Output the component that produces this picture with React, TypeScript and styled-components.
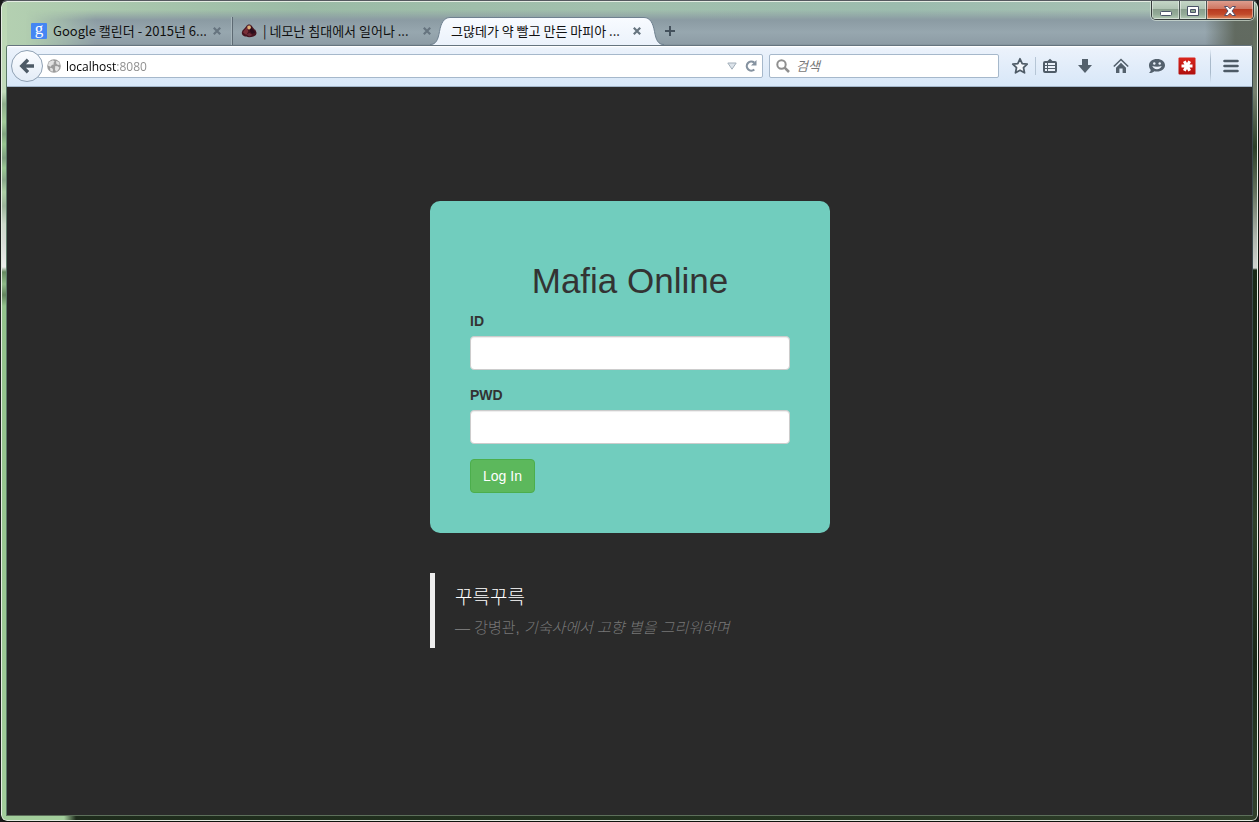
import React, { useState } from "react";
import styled, { createGlobalStyle, css } from "styled-components";

const uiFont = `"Open Sans", "Noto Sans CJK KR", sans-serif`;
const pageFont = `"Liberation Sans", "Noto Sans CJK KR", sans-serif`;

const GlobalStyle = createGlobalStyle`
  *, *::before, *::after { box-sizing: border-box; }
  body { margin: 0; background: #1a1a1a; }
  button, input { font: inherit; margin: 0; padding: 0; border: 0; background: none; }
`;

/* ---------- window frame ---------- */

const Frame = styled.div`
  min-height: 100vh;
  display: flex;
  border: 1px solid #33373b;
  border-color: #55595f #10140f #10140f #1c1f1d;
  border-radius: 7px;
  overflow: hidden;
  font: 12px/16px ${uiFont};
`;

const Glass = styled.div`
  flex: 1;
  min-width: 0;
  display: flex;
  flex-direction: column;
  padding: 0 4px 4px;
  border: 1px solid #e4ece2;
  border-radius: 6px;
  background:
    linear-gradient(to right, #a2cd9b 62px, #1e2c1c 74px, #22331f 60%, #2f3f2a) left bottom / 100% 5px no-repeat,
    linear-gradient(to bottom, #b9d6b1 0, #c2dcbb 90px, #8fae8c 102px, #a4cc9b 120px, #83a581 132px,
      #98c590 142px, #7f9f80 156px, #9ac893 166px, #8aa88a 178px, #aed0a6 190px, #9db59b 204px,
      #cdd9ca 222px, #d8dcd6 240px, #eceeeb 265px, #668a60 270px, #8fb988 282px, #64855f 293px,
      #93c38c 304px, #97c690 500px, #a2cd9b 100%) left top / 5px 100% no-repeat,
    linear-gradient(to bottom, #a9c3ae 0, #5f6b5b 20px, #76806f 90px, #2c3f27 145px, #66735f 190px,
      #aeb4ac 235px, #cfd2ce 266px, #1a2917 268px, #1d2d1a 420px, #2f4029 520px, #1a2717 660px,
      #2b3c26 760px, #2f3f2a 100%) right top / 5px 100% no-repeat,
    linear-gradient(to right, #b4d0b1, #a9c7ad 120px, #9bbba6 300px, #a2c0ad 600px, #9cbcae 900px, #a7c0b3 1150px, #a9c3ae);
`;

const TitleBar = styled.header`
  position: relative;
  height: 43px;
  display: flex;
  align-items: flex-end;
  padding-left: 16px;

  &::before {
    content: "";
    position: absolute;
    inset: 8px 0 0;
    background:
      linear-gradient(to right, transparent calc(100% - 48px), rgba(92, 100, 88, 0.9) calc(100% - 18px)),
      linear-gradient(to bottom, rgba(140, 156, 164, 0) 0, #8b9ba3 10px, #97a7af 22px, #8d9ca5 34px, #7f8e97);
    mask-image: linear-gradient(to right, transparent 20px, rgba(0, 0, 0, 0.5) 60px, #000 90px);
  }
`;

const Tabs = styled.nav`
  position: relative;
  display: flex;
  min-width: 0;
`;

const Tab = styled.div<{ $active?: boolean; $divided?: boolean }>`
  position: relative;
  width: 210px;
  height: 28px;
  margin-bottom: -1px;
  padding: 0 10px 0 9px;
  display: flex;
  align-items: center;
  gap: 6px;
  color: #101010;
  ${(p) => p.$divided && css`box-shadow: inset 1px 0 #5d6a73, -1px 0 #a9b7bd;`}
  ${(p) =>
    p.$active &&
    css`
      z-index: 1;
      &::before {
        content: "";
        position: absolute;
        inset: 0 8px;
        border-top: 1px solid #6f8190;
        background: linear-gradient(#f8fbff, #ebf2fb);
      }
    `}
`;

const TabCap = styled.svg<{ $right?: boolean }>`
  position: absolute;
  top: 0;
  width: 20px;
  height: 28px;
  ${(p) => (p.$right ? css`right: -12px; transform: scaleX(-1);` : css`left: -12px;`)}
`;

const TabTitle = styled.a`
  position: relative;
  flex: 1;
  min-width: 0;
  color: inherit;
  font: 13px/20px "Noto Sans CJK KR", sans-serif;
  text-decoration: none;
  white-space: nowrap;
  overflow: hidden;
`;

const TabIcon = styled.span`
  width: 16px;
  height: 16px;
  flex: none;
  display: flex;
`;

const GoogleIcon = styled(TabIcon)`
  justify-content: center;
  background: #4586f3;
  border-radius: 1px;
  color: #fff;
  font: 17px/12px "Liberation Serif", serif;
`;

const PlainButton = styled.button`
  position: relative;
  flex: none;
  display: flex;
  align-items: center;
  justify-content: center;
`;

const CloseTab = styled(PlainButton)`
  width: 10px;
  height: 10px;
`;

const NewTab = styled(PlainButton)`
  width: 16px;
  height: 28px;
  margin-left: 10px;
`;

const WindowControls = styled.div`
  position: relative;
  align-self: flex-start;
  display: flex;
  height: 20px;
  margin: -2px -1px 0 auto;
  border: 1px solid #353c3b;
  border-top: 0;
  border-radius: 0 0 5px 5px;
  box-shadow: 0 0 0 1px rgba(225, 238, 225, 0.6);
  overflow: hidden;
`;

const ControlButton = styled.button<{ $kind?: "close" }>`
  width: ${(p) => (p.$kind === "close" ? 47 : 27)}px;
  display: flex;
  align-items: center;
  justify-content: center;
  box-shadow: inset 0 0 0 1px rgba(255, 255, 255, 0.45);
  background: ${(p) =>
    p.$kind === "close"
      ? "linear-gradient(#dfa294, #cf7763 45%, #b83a20 50%, #c24a2b 75%, #e08f62)"
      : "linear-gradient(#c7d8c9, #b0c4b3 45%, #8aa08e 50%, #93ab97 75%, #b5cbb6)"};
  & + & { border-left: 1px solid #4b5653; }
`;

/* ---------- navigation toolbar ---------- */

const Shell = styled.div`
  flex: 1;
  display: flex;
  flex-direction: column;
  border: 1px solid #5f7276;
  border-color: #65747f #3c4c4f #5d6f5b #5b7a68;
  border-radius: 3px 3px 0 0;
`;

const Toolbar = styled.div`
  height: 41px;
  display: flex;
  align-items: center;
  padding: 0 12px 0 4px;
  border-bottom: 1px solid #a3b6ca;
  border-radius: 2px 2px 0 0;
  background: linear-gradient(#f6faff 0, #ebf2fb 3px, #d8e7f8 100%);
  box-shadow: inset 0 1px #fff;
`;

const BackButton = styled(PlainButton)`
  z-index: 1;
  width: 32px;
  height: 32px;
  margin-right: -6px;
  border: 1px solid #8fa1b4;
  border-radius: 50%;
  background: linear-gradient(#fcfdff, #e3ecf7);
`;

const Field = styled.div<{ $search?: boolean }>`
  height: 24px;
  display: flex;
  align-items: center;
  background: #fff;
  border: 1px solid #a6b8cb;
  border-radius: 2px;
  ${(p) =>
    p.$search
      ? css`width: 230px; margin-left: 6px; padding-left: 6px; gap: 6px;`
      : css`flex: 1; min-width: 0; padding: 0 4px 0 9px; gap: 5px;`}
`;

const AddressInput = styled.input`
  flex: 1;
  min-width: 0;
  height: 20px;
  outline: none;
  color: #111;
  background: linear-gradient(to right, #000 50px, #8a8a8a 50px);
  background-clip: text;
  -webkit-background-clip: text;
  -webkit-text-fill-color: transparent;
`;

const SearchInput = styled.input`
  flex: 1;
  min-width: 0;
  height: 20px;
  outline: none;
  color: #111;
  &::placeholder { color: #777; opacity: 1; font-size: 13px; font-style: italic; }
`;

const FieldButton = styled(PlainButton)`
  width: 14px;
  height: 20px;
`;

const Actions = styled.div`
  display: flex;
  align-items: center;
  margin-left: 12px;
`;

const ToolButton = styled(PlainButton)<{ $gap?: number }>`
  width: 18px;
  height: 24px;
  margin-left: ${(p) => p.$gap ?? 0}px;
`;

const Divider = styled.span<{ $tall?: boolean }>`
  width: 1px;
  height: ${(p) => (p.$tall ? 34 : 18)}px;
  margin: ${(p) => (p.$tall ? "0 11px 0 14px" : "0 5px 0 6px")};
  background: ${(p) => (p.$tall ? "linear-gradient(transparent, #a9bacb 30%, #a9bacb 70%, transparent)" : "#b6c6d6")};
`;

/* ---------- page ---------- */

const Main = styled.main`
  flex: 1;
  display: flex;
  flex-direction: column;
  align-items: center;
  gap: 40px;
  padding: 114px 0 40px 1px;
  background: #2a2a2a;
  font: 14px/20px ${pageFont};
  color: #333;
`;

const LoginCard = styled.form`
  width: 100%;
  max-width: 400px;
  padding: 40px;
  border-radius: 10px;
  background: #71cdbe;
`;

const Title = styled.h1`
  margin: 20px 0 10px;
  font-size: 35px;
  line-height: 40px;
  font-weight: 400;
  text-align: center;
`;

const FormGroup = styled.div`
  margin-bottom: 15px;
`;

const Label = styled.label`
  display: block;
  margin-bottom: 5px;
  font-weight: 700;
`;

const TextInput = styled.input`
  display: block;
  width: 100%;
  height: 34px;
  padding: 6px 12px;
  border: 1px solid #ccc;
  border-radius: 4px;
  background: #fff;
  box-shadow: inset 0 1px 1px rgba(0, 0, 0, 0.075);
`;

const SubmitButton = styled.button`
  display: block;
  height: 34px;
  padding: 0 12px;
  border: 1px solid #4cae4c;
  border-radius: 4px;
  background: #5cb85c;
  color: #fff;
`;

const Quote = styled.blockquote`
  width: 100%;
  max-width: 400px;
  margin: 0;
  padding: 12px 20px 10px;
  border-left: 5px solid #eee;
  color: #fff;
`;

const QuoteText = styled.p`
  margin: 0 0 8px;
  font-size: 19px;
  line-height: 25px;
  font-weight: 300;
`;

const QuoteSource = styled.footer`
  color: #777;
  font-size: 15px;
  font-weight: 300;
  white-space: nowrap;
`;

/* ---------- drawings ---------- */

const CloseGlyph = () => (
  <svg width="10" height="10" viewBox="0 0 10 10">
    <path d="M1.800 1.800 8.200 8.200M8.200 1.800 1.800 8.200" stroke="#66747f" strokeWidth="2.200" />
  </svg>
);

const CapShape = ({ right }: { right?: boolean }) => (
  <TabCap viewBox="0 0 20 28" $right={right} aria-hidden>
    <defs>
      <linearGradient id="cap" x1="0" y1="0" x2="0" y2="1">
        <stop offset="0" stopColor="#f8fbff" />
        <stop offset="1" stopColor="#ebf2fb" />
      </linearGradient>
    </defs>
    <path d="M0 28C6 27.500 8 23 9.500 14.500S14 .5 20 .5V28Z" fill="url(#cap)" />
    <path d="M0 27.500C6 27.500 8 23 9.500 14.500S14 .5 20 .5" fill="none" stroke="#6f8190" />
  </TabCap>
);

const GemIcon = () => (
  <svg width="16" height="16" viewBox="0 0 16 16">
    <path d="M.8 9.500C1.300 6.500 4 5.500 5.300 3.200 6.200 1.200 9.800 1 11 3.200c1.200 2.200 4 3.500 4.500 6.600.2 3-3 4.400-7.300 4.400S.6 12.800.8 9.500Z" fill="#45141f" />
    <path d="M2 9.500c1-2.500 3-3.500 4-5.500l1.300 4.500-2 3.500Z" fill="#7a2f38" />
    <path d="M9.500 3.500c1 2.800 3.500 3.500 4.800 6l-3.300 1.200-2-2.500Z" fill="#2a0d1c" />
    <path d="M6.500 2.700 9.300 2.500l.8 2.600L8 6.800 6.200 5.200Z" fill="#dfb077" />
    <path d="m5.500 11.500 3-1.800 2.700 2.300-2.900 1.500Z" fill="#6b2a38" />
  </svg>
);

const GlobeIcon = () => (
  <svg width="14" height="14" viewBox="0 0 14 14">
    <circle cx="7" cy="7" r="6.800" fill="#9b9b9b" />
    <path d="M2.800 2.400 6 1.300l1.600 1.200-1.200 1.600.6 1.200-2.200.6-1 1.800-2.600-.9C1 5 1.700 3.400 2.800 2.400ZM9 2l2.600.8 1.300 2.600-1.800.6-1.800-1.300ZM8.200 7l2.600.3 1.600 1.500-1.400 2.500-2 1.400-1-2.200ZM3 8.800l2.200.4 1 1.800-.8 1.800-2-1Z" fill="#e2e2e2" />
  </svg>
);

const BackIcon = () => (
  <svg width="16" height="16" viewBox="0 0 16 16">
    <path d="M9 1.800 2.800 8 9 14.200M3 8h12" fill="none" stroke="#4d5a66" strokeWidth="3.400" />
  </svg>
);

const StarIcon = () => (
  <svg width="18" height="18" viewBox="0 0 18 18">
    <path d="m9 1.800 2.200 4.800 5 .6-3.700 3.500 1 5.100L9 13.300l-4.500 2.500 1-5.100L1.800 7.200l5-.6Z" fill="#f2f6fb" stroke="#4f5c68" strokeWidth="1.800" strokeLinejoin="round" />
  </svg>
);

const ListIcon = () => (
  <svg width="16" height="16" viewBox="0 0 16 16">
    <path d="M3 3h2.500L8 .8 10.500 3H13a2 2 0 0 1 2 2v8a2 2 0 0 1-2 2H3a2 2 0 0 1-2-2V5a2 2 0 0 1 2-2Z" fill="#4f5c68" />
    <path d="M3 5h2v2H3Zm3 0h7v2H6ZM3 8h2v2H3Zm3 0h7v2H6Zm-3 3h2v2H3Zm3 0h7v2H6Z" fill="#eaf1fa" />
  </svg>
);

const DownloadIcon = () => (
  <svg width="16" height="16" viewBox="0 0 16 16">
    <path d="M5 1h6v6h4l-7 8-7-8h4Z" fill="#54616d" />
  </svg>
);

const HomeIcon = () => (
  <svg width="16" height="16" viewBox="0 0 16 16">
    <path d="m.8 8.500 7.200-7 7.200 7" fill="none" stroke="#54616d" strokeWidth="1.600" />
    <path d="m8 4.800 5 4.900V15H9.600v-4.500H6.400V15H3V9.700Z" fill="#54616d" />
  </svg>
);

const ChatIcon = () => (
  <svg width="18" height="16" viewBox="0 0 18 16">
    <path d="M9 1c4.600 0 8 2.600 8 6.200s-3.400 6.300-8 6.300c-1 0-1.900-.1-2.700-.3C5 14.500 3.200 15.200 1 15c1-.8 1.600-1.800 1.800-3C1.700 10.800 1 9.100 1 7.200 1 3.600 4.400 1 9 1Z" fill="#54616d" />
    <circle cx="6.300" cy="5.500" r="1.200" fill="#eaf1fa" />
    <circle cx="11.700" cy="5.500" r="1.200" fill="#eaf1fa" />
    <path d="M4.300 8c2.800 1 6.600 1 9.400 0-.6 2-2.400 3.200-4.700 3.200S4.900 10 4.300 8Z" fill="#eaf1fa" />
  </svg>
);

const AsteriskIcon = () => (
  <svg width="18" height="18" viewBox="0 0 18 18">
    <defs>
      <linearGradient id="red" x1="0" y1="0" x2="0" y2="1">
        <stop offset="0" stopColor="#d9251d" />
        <stop offset="1" stopColor="#b00f0d" />
      </linearGradient>
    </defs>
    <rect x=".5" y=".5" width="17" height="17" rx="1" fill="url(#red)" />
    <path d="M3.500 9h11M6.300 4.200l5.400 9.600M11.700 4.200l-5.400 9.600" stroke="#fff" strokeWidth="3" />
  </svg>
);

const MenuIcon = () => (
  <svg width="16" height="14" viewBox="0 0 16 14">
    <path d="M1.500 2h13M1.500 7h13M1.500 12h13" stroke="#4d5a66" strokeWidth="2.600" strokeLinecap="round" />
  </svg>
);

export default function App() {
  const [address, setAddress] = useState("localhost:8080");

  return (
    <>
      <GlobalStyle />
      <Frame>
        <Glass>
          <TitleBar>
            <Tabs aria-label="Tabs">
              <Tab>
                <GoogleIcon aria-hidden>g</GoogleIcon>
                <TabTitle href="#calendar">Google 캘린더 - 2015년 6...</TabTitle>
                <CloseTab aria-label="Close tab"><CloseGlyph /></CloseTab>
              </Tab>
              <Tab $divided>
                <TabIcon><GemIcon /></TabIcon>
                <TabTitle href="#blog">| 네모난 침대에서 일어나 ...</TabTitle>
                <CloseTab aria-label="Close tab"><CloseGlyph /></CloseTab>
              </Tab>
              <Tab $active>
                <CapShape />
                <CapShape right />
                <TabTitle href="#mafia">그많데가 약 빨고 만든 마피아 ...</TabTitle>
                <CloseTab aria-label="Close tab"><CloseGlyph /></CloseTab>
              </Tab>
              <NewTab aria-label="New tab">
                <svg width="12" height="12" viewBox="0 0 12 12">
                  <path d="M6 1v10M1 6h10" stroke="#44515c" strokeWidth="2" />
                </svg>
              </NewTab>
            </Tabs>
            <WindowControls>
              <ControlButton aria-label="Minimize">
                <svg width="14" height="18" viewBox="0 0 14 18">
                  <rect x="1.500" y="10.500" width="11" height="4" rx="1" fill="#fff" stroke="#4a5468" />
                </svg>
              </ControlButton>
              <ControlButton aria-label="Maximize">
                <svg width="14" height="18" viewBox="0 0 14 18">
                  <path d="M1.500 5.500h11v9h-11ZM4.500 8.500v3h5v-3Z" fill="#fff" fillRule="evenodd" stroke="#4a5468" />
                </svg>
              </ControlButton>
              <ControlButton $kind="close" aria-label="Close">
                <svg width="14" height="18" viewBox="0 0 14 18">
                  <path d="M1.500 5.500h3.300L7 7.800l2.200-2.300h3.300L9 10l3.500 4.500H9.200L7 12.200l-2.200 2.300H1.500L5 10Z" fill="#fff" stroke="#54506a" />
                </svg>
              </ControlButton>
            </WindowControls>
          </TitleBar>

          <Shell>
            <Toolbar>
              <BackButton aria-label="Back"><BackIcon /></BackButton>
              <Field>
                <GlobeIcon />
                <AddressInput aria-label="Address" value={address} onChange={(e) => setAddress(e.target.value)} />
                <FieldButton aria-label="History">
                  <svg width="10" height="8" viewBox="0 0 10 8">
                    <path d="M.8 1h8.400L5 7.200Z" fill="#dce3ea" stroke="#a3afba" />
                  </svg>
                </FieldButton>
                <FieldButton aria-label="Reload">
                  <svg width="12" height="12" viewBox="0 0 12 12">
                    <path d="M9.300 9.500A4.500 4.500 0 1 1 9.200 2.700" fill="none" stroke="#8592a0" strokeWidth="2.200" />
                    <path d="M11.500 0v5.500H6Z" fill="#8592a0" />
                  </svg>
                </FieldButton>
              </Field>
              <Field $search>
                <svg width="14" height="14" viewBox="0 0 14 14" aria-hidden>
                  <circle cx="5.500" cy="5.500" r="4.200" fill="none" stroke="#8f8f8f" strokeWidth="2" />
                  <path d="m8.600 8.600 4.400 4.400" stroke="#8f8f8f" strokeWidth="2.600" />
                </svg>
                <SearchInput aria-label="Search" placeholder="검색" />
              </Field>
              <Actions>
                <ToolButton aria-label="Bookmark"><StarIcon /></ToolButton>
                <Divider />
                <ToolButton aria-label="Bookmark list"><ListIcon /></ToolButton>
                <ToolButton $gap={17} aria-label="Downloads"><DownloadIcon /></ToolButton>
                <ToolButton $gap={18} aria-label="Home"><HomeIcon /></ToolButton>
                <ToolButton $gap={18} aria-label="Chat"><ChatIcon /></ToolButton>
                <ToolButton $gap={12} aria-label="Extension"><AsteriskIcon /></ToolButton>
                <Divider $tall />
                <ToolButton aria-label="Menu"><MenuIcon /></ToolButton>
              </Actions>
            </Toolbar>

            <Main>
              <LoginCard onSubmit={(e) => e.preventDefault()}>
                <Title>Mafia Online</Title>
                <FormGroup>
                  <Label htmlFor="user-id">ID</Label>
                  <TextInput id="user-id" type="text" />
                </FormGroup>
                <FormGroup>
                  <Label htmlFor="user-pwd">PWD</Label>
                  <TextInput id="user-pwd" type="password" />
                </FormGroup>
                <SubmitButton type="submit">Log In</SubmitButton>
              </LoginCard>
              <Quote>
                <QuoteText>꾸륵꾸륵</QuoteText>
                <QuoteSource>
                  — 강병관, <cite>기숙사에서 고향 별을 그리워하며</cite>
                </QuoteSource>
              </Quote>
            </Main>
          </Shell>
        </Glass>
      </Frame>
    </>
  );
}
